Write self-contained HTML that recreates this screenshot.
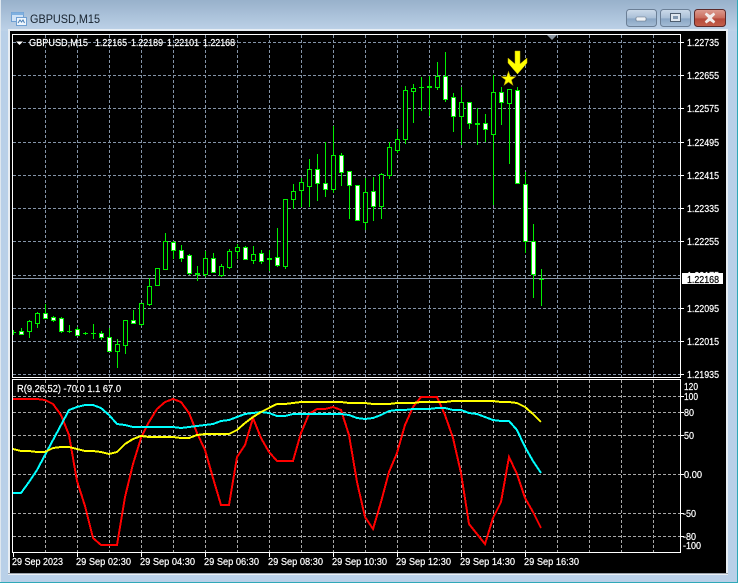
<!DOCTYPE html>
<html><head><meta charset="utf-8"><title>GBPUSD,M15</title>
<style>
html,body{margin:0;padding:0;background:#b9d0e8;width:738px;height:583px;overflow:hidden}
svg{display:block}
text{font-family:"Liberation Sans",sans-serif;font-size:10.5px;fill:#fff;stroke:#fff;stroke-width:.22px}
</style></head><body>
<svg width="738" height="583" viewBox="0 0 738 583" xmlns="http://www.w3.org/2000/svg">
<defs>
<linearGradient id="tb" x1="0" y1="0" x2="0" y2="1"><stop offset="0" stop-color="#98b1cb"/><stop offset="1" stop-color="#bdd2e8"/></linearGradient>
<linearGradient id="bn" x1="0" y1="0" x2="0" y2="1"><stop offset="0" stop-color="#cddbea"/><stop offset=".5" stop-color="#a9bfd7"/><stop offset=".55" stop-color="#8aa6c4"/><stop offset="1" stop-color="#a5bdd6"/></linearGradient>
<linearGradient id="cl" x1="0" y1="0" x2="0" y2="1"><stop offset="0" stop-color="#dd9e92"/><stop offset=".5" stop-color="#c96c5c"/><stop offset=".55" stop-color="#b5493a"/><stop offset="1" stop-color="#c4604c"/></linearGradient>
</defs>
<!-- window frame -->
<rect width="738" height="583" fill="#b9d0e8"/>
<rect width="738" height="31" fill="url(#tb)"/>
<path d="M0 0V583" stroke="#dfe8f0" stroke-width="2"/>
<path d="M737.500 0V583M0 582.500H738" stroke="#2fa8b8" shape-rendering="crispEdges"/>
<rect x="8" y="29" width="720" height="546" fill="#e8eef4"/>
<path d="M8 573.500H728" stroke="#9aa3ad" stroke-width="1"/>
<rect x="10" y="31" width="716" height="542" fill="#000"/>

<!-- title icon -->
<rect x="11.500" y="12.500" width="12" height="9" fill="#cfe2f6" stroke="#6f9fd2"/>
<rect x="11.500" y="12.500" width="12" height="2.500" fill="#7fb0e0"/>
<rect x="16.500" y="17.500" width="10" height="8" fill="#eef5fc" stroke="#6f9fd2"/>
<path d="M18 23l2-3 1.500 2 1.500-2 1.500 3" fill="none" stroke="#4a7fb5"/>
<text x="30" y="23" textLength="70" lengthAdjust="spacingAndGlyphs" style="font-size:12px;fill:#17222e;stroke:none">GBPUSD,M15</text>

<!-- buttons -->
<rect x="626.500" y="9.500" width="30" height="17" rx="3" fill="url(#bn)" stroke="#6b7f96"/>
<rect x="636" y="17" width="10" height="4" rx="1" fill="#eef2f6" stroke="#5e6f82" stroke-width=".6"/>
<rect x="660.500" y="9.500" width="30" height="17" rx="3" fill="url(#bn)" stroke="#6b7f96"/>
<rect x="670.500" y="13.500" width="10" height="8" fill="#dfe7ef" stroke="#4e5e70"/>
<rect x="673" y="16" width="5" height="3" fill="#8298b0"/>
<rect x="694.500" y="9.500" width="31" height="17" rx="3" fill="url(#cl)" stroke="#5c2a2a"/>
<path d="M705.500 13.500l4.500 3.200 4.500-3.200M705.500 22.500l4.500-3.200 4.500 3.200M706 14l8 8M714 14l-8 8" fill="none" stroke="#f2ecea" stroke-width="2.600"/>

<g shape-rendering="crispEdges">
<!-- grid main -->
<path fill="none" stroke="#8494a8" stroke-dasharray="3 2" d="M13 42.500H680M13 75.500H680M13 108.500H680M13 142.500H680M13 175.500H680M13 208.500H680M13 241.500H680M13 275.500H680M13 308.500H680M13 341.500H680M13 374.500H680
M45.500 35V377M77.500 35V377M109.500 35V377M141.500 35V377M173.500 35V377M205.500 35V377M237.500 35V377M269.500 35V377M301.500 35V377M333.500 35V377M365.500 35V377M397.500 35V377M429.500 35V377M461.500 35V377M493.500 35V377M525.500 35V377M557.500 35V377M589.500 35V377M621.500 35V377M653.500 35V377"/>
<!-- grid sub -->
<path fill="none" stroke="#a8a8a8" stroke-dasharray="3 2" d="M13 396.500H680M13 412.500H680M13 435.500H680M13 474.500H680M13 513.500H680M13 536.500H680
M45.500 380V552M77.500 380V552M109.500 380V552M141.500 380V552M173.500 380V552M205.500 380V552M237.500 380V552M269.500 380V552M301.500 380V552M333.500 380V552M365.500 380V552M397.500 380V552M429.500 380V552M461.500 380V552M493.500 380V552M525.500 380V552M557.500 380V552M589.500 380V552M621.500 380V552M653.500 380V552"/>
<!-- price line -->
<path d="M13 278.500H681" stroke="#8896a8"/>
<!-- wicks -->
<path fill="none" stroke="#00f000" d="M13.500 330V335M21.500 328V334M29.500 320V338M37.500 312V328M45.500 304V318M53.500 316V322M61.500 317V333M69.500 325V333M77.500 327V336M85.500 332V335M93.500 324V339M101.500 331V340M109.500 328V352M117.500 339V368M125.500 320V354M133.500 310V323M141.500 303V326M149.500 278V306M157.500 268V286M165.500 233V269M173.500 241V259M181.500 245V262M189.500 254V275M197.500 266V281M205.500 251V277M213.500 253V273M221.500 264V277M229.500 249V269M237.500 244V259M245.500 246V260M253.500 246V264M261.500 250V264M269.500 250V271M277.500 228V267M285.500 199V269M293.500 184V209M301.500 178V207M309.500 159V207M317.500 154V201M325.500 142V197M333.500 126V193M341.500 153V186M349.500 171V219M357.500 185V221M365.500 178V230M373.500 177V221M381.500 173V219M389.500 142V179M397.500 129V153M405.500 86V144M413.500 84V123M421.500 77V111M429.500 76V116M437.500 62V90M445.500 52V102M453.500 93V132M461.500 87V145M469.500 102V129M477.500 108V145M485.500 114V142M493.500 75V205M501.500 87V125M509.500 89V164M517.500 87V183M525.500 172V253M533.500 224V298M541.500 269V306"/>
<!-- doji -->
<path fill="none" stroke="#00f000" d="M13 332.500h3M67 331.500h5M83 333.500h5M91 333.500h5M419 87.500h5M539 279.500h5"/>
<path fill="none" stroke="#00f000" stroke-width="2" d="M195 274h5M267 259h5M427 87h5M475 124h5"/>
<!-- hollow bodies -->
<path fill="#000" stroke="#00f000" d="M27.500 321.500h4v10h-4zM35.500 313.500h4v10h-4zM115.500 344.500h4v7h-4zM123.500 320.500h4v25h-4zM139.500 303.500h4v21h-4zM147.500 286.500h4v18h-4zM155.500 268.500h4v17h-4zM163.500 241.500h4v28h-4zM203.500 258.500h4v16h-4zM219.500 266.500h4v9h-4zM227.500 251.500h4v16h-4zM235.500 247.500h4v4h-4zM251.500 254.500h4v6h-4zM283.500 199.500h4v67h-4zM291.500 191.500h4v8h-4zM299.500 182.500h4v8h-4zM307.500 169.500h4v17h-4zM331.500 155.500h4v34h-4zM363.500 192.500h4v30h-4zM379.500 174.500h4v32h-4zM387.500 147.500h4v28h-4zM395.500 139.500h4v11h-4zM403.500 90.500h4v49h-4zM411.500 88.500h4v3h-4zM435.500 76.500h4v11h-4zM459.500 102.500h4v14h-4zM491.500 92.500h4v42h-4zM507.500 89.500h4v14h-4z"/>
<!-- filled bodies -->
<path fill="#fff" stroke="#00f000" d="M19.500 331.500h4v3h-4zM43.500 313.500h4v5h-4zM51.500 317.500h4v3h-4zM59.500 318.500h4v13h-4zM75.500 329.500h4v6h-4zM99.500 333.500h4v4h-4zM107.500 337.500h4v14h-4zM131.500 320.500h4v3h-4zM171.500 242.500h4v8h-4zM179.500 250.500h4v8h-4zM187.500 255.500h4v18h-4zM211.500 258.500h4v14h-4zM243.500 247.500h4v12h-4zM259.500 253.500h4v8h-4zM275.500 257.500h4v8h-4zM315.500 169.500h4v14h-4zM323.500 183.500h4v6h-4zM339.500 155.500h4v17h-4zM347.500 171.500h4v14h-4zM355.500 185.500h4v35h-4zM371.500 191.500h4v15h-4zM443.500 76.500h4v23h-4zM451.500 97.500h4v19h-4zM467.500 102.500h4v21h-4zM483.500 123.500h4v6h-4zM499.500 92.500h4v10h-4zM515.500 90.500h4v93h-4zM523.500 184.500h4v57h-4zM531.500 241.500h4v33h-4z"/>
<!-- pane borders -->
<path fill="none" stroke="#fff" d="M12.500 34.500H680.500V377.500H12.500ZM12.500 379.500H680.500V552.500H12.500Z"/>
<!-- axis ticks -->
<path fill="none" stroke="#fff" d="M681 42.500h3M681 75.500h3M681 108.500h3M681 142.500h3M681 175.500h3M681 208.500h3M681 241.500h3M681 308.500h3M681 341.500h3M681 374.500h3M681 396.500h3M681 412.500h3M681 435.500h3M681 474.500h3M681 513.500h3M681 536.500h3
M13.500 553v4M77.500 553v4M141.500 553v4M205.500 553v4M269.500 553v4M333.500 553v4M397.500 553v4M461.500 553v4M525.500 553v4"/>
<!-- indicator lines -->
<polyline fill="none" stroke="#ff0000" stroke-width="2" points="13,399 21,399 29,399 37,399 45,400 53,404 61,415 69,435 77,481 85,506 93,538 101,545 109,545 117,545 125,497 133,464 141,438 149,422 157,409 165,402 173,399 181,402 189,413 197,433 205,450 213,478 221,505 229,505 237,457 245,445 253,418 261,438 269,452 277,461 285,461 293,461 301,433 309,414 317,409 325,409 333,407 341,410 349,435 357,482 365,517 373,529 381,502 389,472 397,453 405,425 413,407 421,397 429,397 437,397 445,415 453,438 461,473 469,524 477,534 485,544 493,518 501,502 509,457 517,474 525,498 533,512 541,528"/>
<polyline fill="none" stroke="#00ffff" stroke-width="2" points="13,493 21,493 29,482 37,470 45,455 53,440 61,425 69,410 77,407 85,405 93,405 101,408 109,415 117,424 125,425 133,427 141,427 149,427 157,427 165,427 173,427 181,428 189,427 197,426 205,425 213,424 221,421 229,420 237,417 245,414 253,413 261,412 269,413 277,416 285,416 293,414 301,414 309,414 317,414 325,414 333,414 341,414 349,415 357,418 365,419 373,418 381,415 389,411 397,410 405,410 413,409 421,409 429,409 437,408 445,408 453,410 461,410 469,413 477,414 485,417 493,420 501,421 509,421 517,430 525,447 533,461 541,473"/>
<polyline fill="none" stroke="#ffff00" stroke-width="2" points="13,449 21,451 29,451 37,452 45,452 53,448 61,447 69,447 77,449 85,451 93,451 101,452 109,454 117,452 125,444 133,439 141,436 149,437 157,437 165,437 173,437 181,438 189,438 197,435 205,434 213,434 221,434 229,434 237,430 245,423 253,417 261,412 269,408 277,404 285,404 293,403 301,402 309,402 317,402 325,402 333,402 341,402 349,403 357,403 365,403 373,404 381,404 389,404 397,403 405,403 413,403 421,402 429,402 437,402 445,402 453,401 461,401 469,401 477,401 485,401 493,401 501,402 509,402 517,403 525,407 533,414 541,422"/>
<!-- hidden axis label under price box -->
<text x="687" y="279" textLength="32" lengthAdjust="spacingAndGlyphs">1.22175</text>
<!-- price label -->
<rect x="682" y="273" width="41" height="11" fill="#fff"/>
</g>

<!-- shift marker -->
<polygon points="547,35 557,35 552,40" fill="#8a94a0"/>
<!-- objects -->
<polygon points="515,51 520,51 520,64 527,58 527,63 517.500,74 508,63 508,58 515,64" fill="#ffff00" stroke="#c8b400" stroke-width=".5"/>
<polygon points="508.500,71.500 510.300,76.600 515.600,76.700 511.400,79.900 512.900,85.100 508.500,82 504.100,85.100 505.600,79.900 501.400,76.700 506.700,76.600" fill="#ffff00" stroke="#b8a000" stroke-width=".6"/>

<!-- header text -->
<polygon points="16,41.500 23,41.500 19.500,45" fill="#fff"/>
<text x="29" y="46" textLength="59" lengthAdjust="spacingAndGlyphs">GBPUSD,M15</text>
<text x="95" y="46" textLength="32" lengthAdjust="spacingAndGlyphs">1.22165</text>
<text x="131" y="46" textLength="32" lengthAdjust="spacingAndGlyphs">1.22189</text>
<text x="167" y="46" textLength="32" lengthAdjust="spacingAndGlyphs">1.22101</text>
<text x="203" y="46" textLength="32" lengthAdjust="spacingAndGlyphs">1.22168</text>
<text x="17" y="392" textLength="104" lengthAdjust="spacingAndGlyphs">R(9,26,52) -70.0 1.1 67.0</text>

<!-- price axis -->
<text x="687" y="46" textLength="32" lengthAdjust="spacingAndGlyphs">1.22735</text>
<text x="687" y="79" textLength="32" lengthAdjust="spacingAndGlyphs">1.22655</text>
<text x="687" y="112" textLength="32" lengthAdjust="spacingAndGlyphs">1.22575</text>
<text x="687" y="146" textLength="32" lengthAdjust="spacingAndGlyphs">1.22495</text>
<text x="687" y="179" textLength="32" lengthAdjust="spacingAndGlyphs">1.22415</text>
<text x="687" y="212" textLength="32" lengthAdjust="spacingAndGlyphs">1.22335</text>
<text x="687" y="245" textLength="32" lengthAdjust="spacingAndGlyphs">1.22255</text>
<text x="687" y="283" textLength="32" lengthAdjust="spacingAndGlyphs" style="fill:#000;stroke:#000">1.22168</text>
<text x="687" y="312" textLength="32" lengthAdjust="spacingAndGlyphs">1.22095</text>
<text x="687" y="345" textLength="32" lengthAdjust="spacingAndGlyphs">1.22015</text>
<text x="687" y="378" textLength="32" lengthAdjust="spacingAndGlyphs">1.21935</text>

<!-- indicator axis -->
<text x="684" y="390" textLength="14" lengthAdjust="spacingAndGlyphs">120</text>
<text x="684" y="400" textLength="14" lengthAdjust="spacingAndGlyphs">100</text>
<text x="684" y="416" textLength="10" lengthAdjust="spacingAndGlyphs">80</text>
<text x="684" y="439" textLength="10" lengthAdjust="spacingAndGlyphs">50</text>
<text x="684" y="478" textLength="18" lengthAdjust="spacingAndGlyphs">0.00</text>
<text x="683" y="517" textLength="13" lengthAdjust="spacingAndGlyphs">-50</text>
<text x="683" y="540" textLength="13" lengthAdjust="spacingAndGlyphs">-80</text>
<text x="683" y="549" textLength="18" lengthAdjust="spacingAndGlyphs">-100</text>

<!-- time axis -->
<text x="12" y="565" textLength="51" lengthAdjust="spacingAndGlyphs">29 Sep 2023</text>
<text x="76" y="565" textLength="55" lengthAdjust="spacingAndGlyphs">29 Sep 02:30</text>
<text x="140" y="565" textLength="55" lengthAdjust="spacingAndGlyphs">29 Sep 04:30</text>
<text x="204" y="565" textLength="55" lengthAdjust="spacingAndGlyphs">29 Sep 06:30</text>
<text x="268" y="565" textLength="55" lengthAdjust="spacingAndGlyphs">29 Sep 08:30</text>
<text x="332" y="565" textLength="55" lengthAdjust="spacingAndGlyphs">29 Sep 10:30</text>
<text x="396" y="565" textLength="55" lengthAdjust="spacingAndGlyphs">29 Sep 12:30</text>
<text x="460" y="565" textLength="55" lengthAdjust="spacingAndGlyphs">29 Sep 14:30</text>
<text x="524" y="565" textLength="55" lengthAdjust="spacingAndGlyphs">29 Sep 16:30</text>
</svg>
</body></html>
